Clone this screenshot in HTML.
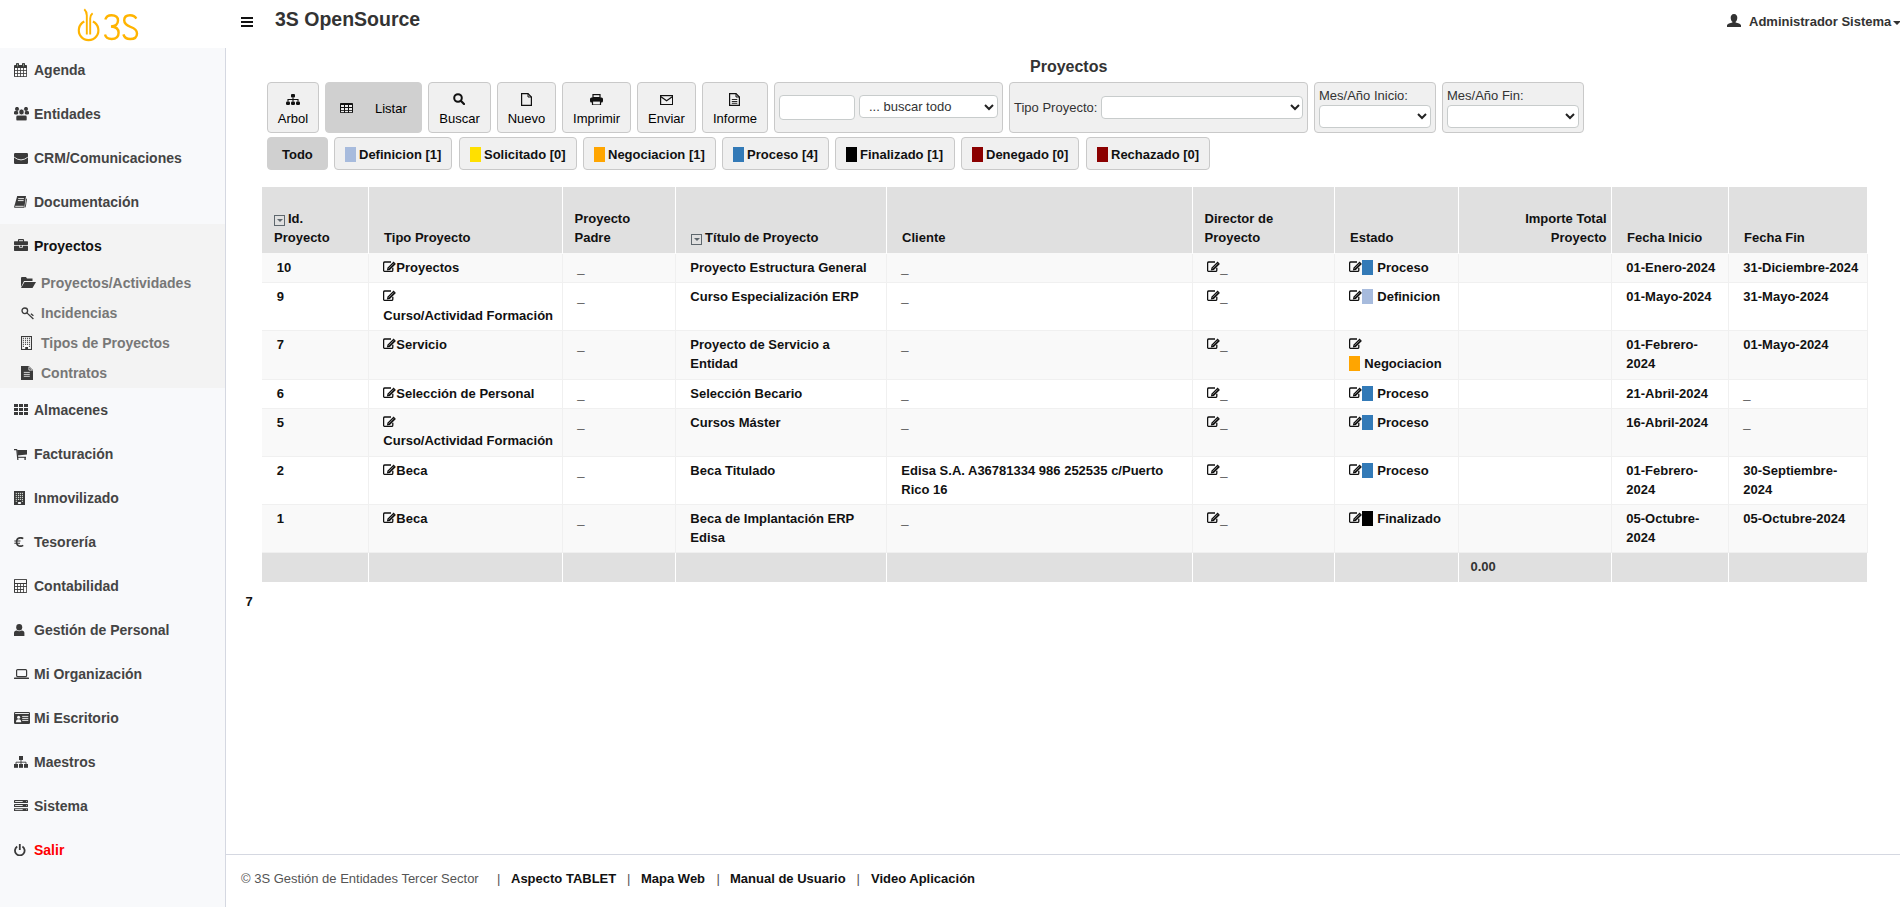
<!DOCTYPE html>
<html><head><meta charset="utf-8">
<style>
*{box-sizing:border-box;margin:0;padding:0}
html,body{width:1900px;height:907px;overflow:hidden;background:#fff;font-family:"Liberation Sans",sans-serif;color:#333}
.abs{position:absolute}
#logo{left:0;top:0;width:225px;height:48px}
#side{left:0;top:48px;width:226px;height:859px;background:#f8f9fb;border-right:1px solid #d5d8e1}
.mi{position:absolute;left:0;width:225px;height:44px;font-weight:bold;font-size:14px;color:#444}
.mi span{position:absolute;left:34px;top:14px;line-height:16px}
.mi svg{position:absolute}
.sub{position:absolute;left:0;top:176px;width:225px;height:164px;background:#f3f3f3}
.si{position:absolute;left:0;width:225px;height:30px;font-weight:bold;font-size:14px;color:#777}
.si span{position:absolute;left:41px;top:7px;line-height:16px}
.si svg{position:absolute}
#hdr-title{left:275px;top:7px;font-size:19.5px;font-weight:bold;color:#333;line-height:24px}
#user{left:1749px;top:14px;font-size:13px;font-weight:bold;color:#333;line-height:16px}
#ptitle{left:1030px;top:58px;font-size:16px;font-weight:bold;color:#333;line-height:18px}
.btn{position:absolute;top:82px;height:51px;background:#f0f0f0;border:1px solid #c9c9c9;border-radius:4px;font-size:13px;color:#000}
.btn .t{position:absolute;left:0;right:0;top:28px;text-align:center;line-height:15px}
.btn svg{position:absolute}
.grp{position:absolute;top:82px;height:51px;background:#f0f0f0;border:1px solid #c9c9c9;border-radius:4px;font-size:13px;color:#333}
.inp{position:absolute;background:#fff;border:1px solid #c8cccc;border-radius:4px}
.chev{position:absolute}
.fb{position:absolute;top:137px;height:33px;background:#f0f0f0;border:1px solid #c9c9c9;border-radius:4px;font-size:13px;font-weight:bold;color:#111}
.fb .sw{position:absolute;left:10px;top:9px;width:11px;height:15px}
.fb .t{position:absolute;top:9px;line-height:15px}
#tbl{position:absolute;left:262px;top:187px;border-collapse:collapse;table-layout:fixed;font-size:13px;font-weight:bold;color:#111}
#tbl th{background:#e0e0e0;border-left:1px solid #fff;border-right:1px solid #fff;height:66px;vertical-align:bottom;text-align:left;padding:0 6px 5.5px 12px;line-height:18.3px}
#tbl td{border:1px solid #f0f0f0;vertical-align:top;padding:5px 6px 5px 12px;line-height:18.57px}
#tbl tr.st td{background:#f9f9f9}
#tbl tr.r1 td{border-top-color:#f9f9f9}
#tbl tr.r3 td{padding-bottom:5.87px}
#tbl tr.r4 td{padding-bottom:4.13px}
#tbl tr.ft td{background:#e0e0e0;border-color:#fff;height:30px}
#tbl th:first-child,#tbl td:first-child{border-left:0}
.sp{padding-left:15.6px!important}
#tbl td.sp{padding-left:14.8px!important}
.dash{font-weight:normal;color:#555}
.ed{display:inline-block;width:13px;height:11px;vertical-align:0}
.esw{display:inline-block;width:11px;height:15px;vertical-align:-3px;margin-right:4px}
.sortb{display:inline-block;width:11px;height:11px;border:1px solid #5e676d;vertical-align:-3px;position:relative;margin-right:3px}
.sortb:after{content:"";position:absolute;left:2px;top:3px;border-left:3px solid transparent;border-right:3px solid transparent;border-top:3px solid #5e676d}
#seven{left:245.5px;top:594px;font-size:13px;font-weight:bold;color:#111;line-height:16px}
#foot{left:226px;top:854px;width:1674px;height:53px;border-top:1px solid #d5d8e1;font-size:13px;color:#555}
.ft{top:871px;font-size:13px;line-height:16px;color:#555;white-space:nowrap}
.ft.b{font-weight:bold;color:#111}
</style></head><body>
<div id="logo" class="abs">
<svg class="abs" style="left:0;top:0" width="225" height="48" viewBox="0 0 225 48" fill="none" stroke="#ffb400">
 <path d="M84.3 21.6 A9.8 9.8 0 1 0 92.9 21.6" stroke-width="2.2"/>
 <path d="M86.8 34.6 V15.5 Q86.8 11.5 84.3 9.2" stroke-width="1.9"/>
 <path d="M90.2 34.6 V18.5 Q90.2 15 92.6 13.2" stroke-width="1.9"/>
 <path d="M105.3 19.5 Q106.5 15.2 111.5 15.2 Q118 15.2 118 20.5 Q118 26 111 26.5 Q118.6 26.8 118.6 32.8 Q118.6 39 111.6 39 Q106 39 105 34.5" stroke-width="2.4"/>
 <path d="M136.3 18.6 Q134.5 15.2 130 15.2 Q124.2 15.2 124.2 20.3 Q124.2 24.5 130.5 26.8 Q137 29 137 33.4 Q137 39 130.2 39 Q124.6 39 123.4 34.4" stroke-width="2.4"/>
</svg>
</div>
<div id="side" class="abs">
<div class="sub"></div>
<div class="mi" style="top:0px"><span>Agenda</span></div>
<svg class="abs" style="left:14px;top:15px" width="13" height="14" viewBox="0 0 13 14"><rect x="0" y="2" width="13" height="12" rx="0.8" fill="#3a3a3a"/><rect x="2" y="0" width="3" height="3.5" rx="0.8" fill="#3a3a3a"/><rect x="8" y="0" width="3" height="3.5" rx="0.8" fill="#3a3a3a"/><rect x="3.1" y="0.8" width="0.8" height="2.6" fill="#9a9"/><rect x="9.1" y="0.8" width="0.8" height="2.6" fill="#9a9"/><rect x="1" y="5" width="2.2" height="2.2" fill="#fbfbfb"/><rect x="1" y="8" width="2.2" height="2.2" fill="#fbfbfb"/><rect x="1" y="11" width="2.2" height="2.2" fill="#fbfbfb"/><rect x="4" y="5" width="2.2" height="2.2" fill="#fbfbfb"/><rect x="4" y="8" width="2.2" height="2.2" fill="#fbfbfb"/><rect x="4" y="11" width="2.2" height="2.2" fill="#fbfbfb"/><rect x="7" y="5" width="2.2" height="2.2" fill="#fbfbfb"/><rect x="7" y="8" width="2.2" height="2.2" fill="#fbfbfb"/><rect x="7" y="11" width="2.2" height="2.2" fill="#fbfbfb"/><rect x="10" y="5" width="2.2" height="2.2" fill="#fbfbfb"/><rect x="10" y="8" width="2.2" height="2.2" fill="#fbfbfb"/><rect x="10" y="11" width="2.2" height="2.2" fill="#fbfbfb"/></svg>
<div class="mi" style="top:44px"><span>Entidades</span></div>
<svg class="abs" style="left:14px;top:59px" width="15" height="14" viewBox="0 0 15 14"><circle cx="3" cy="1.9" r="2" fill="#3a3a3a"/><circle cx="12" cy="1.9" r="2" fill="#3a3a3a"/><rect x="0" y="4.1" width="4.2" height="3.5" rx="1.4" fill="#3a3a3a"/><rect x="10.8" y="4.1" width="4.2" height="3.5" rx="1.4" fill="#3a3a3a"/><ellipse cx="7.5" cy="5" rx="2.7" ry="2.9" fill="#3a3a3a" stroke="#f8f9fb" stroke-width="0.7"/><rect x="2" y="8.2" width="11" height="5.6" rx="1.6" fill="#3a3a3a" stroke="#f8f9fb" stroke-width="0.6"/></svg>
<div class="mi" style="top:88px"><span>CRM/Comunicaciones</span></div>
<svg class="abs" style="left:14px;top:105px" width="14" height="11" viewBox="0 0 14 11"><rect x="0" y="0" width="14" height="11" rx="1.2" fill="#3a3a3a"/><path d="M0.2 4.2 Q7 9.6 13.8 4.2" fill="none" stroke="#f8f9fb" stroke-width="0.9"/></svg>
<div class="mi" style="top:132px"><span>Documentación</span></div>
<svg class="abs" style="left:14px;top:148px" width="13" height="12" viewBox="0 0 13 12"><path d="M3.2 0 H12 L10.3 11.8 H0.6 Q0 11.8 0.1 11 Z" fill="#3a3a3a"/><path d="M12.7 2.6 L11.2 11.4" stroke="#3a3a3a" stroke-width="0.9"/><path d="M4.2 2.6 H9.9 M3.9 4.6 H9.6 M1.2 10.3 H9.7" stroke="#fbfbfb" stroke-width="0.9"/></svg>
<div class="mi" style="top:176px"><span style="color:#111">Proyectos</span></div>
<svg class="abs" style="left:14px;top:191px" width="14" height="12" viewBox="0 0 14 12"><rect x="4.5" y="0.6" width="5" height="2.6" rx="0.5" fill="none" stroke="#3a3a3a" stroke-width="1.1"/><rect x="0" y="2.3" width="14" height="3.6" rx="0.6" fill="#3a3a3a"/><rect x="0" y="6.8" width="14" height="5.1" rx="0.6" fill="#3a3a3a"/><rect x="5.2" y="6.1" width="3.6" height="2.6" fill="#f3f3f3"/><rect x="6" y="6.6" width="2" height="1.3" fill="#3a3a3a"/></svg>
<div class="si" style="top:220px"><span>Proyectos/Actividades</span></div>
<svg class="abs" style="left:21px;top:229px" width="15" height="11" viewBox="0 0 15 11"><path d="M0 1 Q0 0 1 0 H5 L6 1.5 H11.5 V4 H3 L0 10Z" fill="#3a3a3a"/><path d="M3.5 5 H15 L11.5 11 H0Z" fill="#3a3a3a"/></svg>
<div class="si" style="top:250px"><span>Incidencias</span></div>
<svg class="abs" style="left:21px;top:259px" width="13" height="13" viewBox="0 0 13 13"><circle cx="3.8" cy="3.8" r="2.8" fill="none" stroke="#3a3a3a" stroke-width="1.3"/><path d="M5.9 5.9 L12.4 12 M9.9 6.7 L12.4 8.8" stroke="#3a3a3a" stroke-width="1.3"/></svg>
<div class="si" style="top:280px"><span>Tipos de Proyectos</span></div>
<svg class="abs" style="left:21px;top:288px" width="11" height="14" viewBox="0 0 11 14"><rect x="0.5" y="0.5" width="10" height="13" fill="#fbfbfb" stroke="#3a3a3a" stroke-width="1.1"/><rect x="1.8499999999999999" y="1.7499999999999998" width="1.1" height="1.1" fill="#3a3a3a"/><rect x="3.95" y="1.7499999999999998" width="1.1" height="1.1" fill="#3a3a3a"/><rect x="5.95" y="1.7499999999999998" width="1.1" height="1.1" fill="#3a3a3a"/><rect x="7.95" y="1.7499999999999998" width="1.1" height="1.1" fill="#3a3a3a"/><rect x="1.8499999999999999" y="3.75" width="1.1" height="1.1" fill="#3a3a3a"/><rect x="3.95" y="3.75" width="1.1" height="1.1" fill="#3a3a3a"/><rect x="5.95" y="3.75" width="1.1" height="1.1" fill="#3a3a3a"/><rect x="7.95" y="3.75" width="1.1" height="1.1" fill="#3a3a3a"/><rect x="1.8499999999999999" y="5.75" width="1.1" height="1.1" fill="#3a3a3a"/><rect x="3.95" y="5.75" width="1.1" height="1.1" fill="#3a3a3a"/><rect x="5.95" y="5.75" width="1.1" height="1.1" fill="#3a3a3a"/><rect x="7.95" y="5.75" width="1.1" height="1.1" fill="#3a3a3a"/><rect x="1.8499999999999999" y="7.750000000000001" width="1.1" height="1.1" fill="#3a3a3a"/><rect x="3.95" y="7.750000000000001" width="1.1" height="1.1" fill="#3a3a3a"/><rect x="5.95" y="7.750000000000001" width="1.1" height="1.1" fill="#3a3a3a"/><rect x="7.95" y="7.750000000000001" width="1.1" height="1.1" fill="#3a3a3a"/><rect x="1.8499999999999999" y="9.75" width="1.1" height="1.1" fill="#3a3a3a"/><rect x="7.95" y="9.75" width="1.1" height="1.1" fill="#3a3a3a"/><rect x="4.2" y="11" width="2.8" height="2.5" fill="#3a3a3a"/></svg>
<div class="si" style="top:310px"><span>Contratos</span></div>
<svg class="abs" style="left:21px;top:318px" width="12" height="14" viewBox="0 0 12 14"><path d="M0 0 H8 L12 4 V14 H0Z" fill="#3a3a3a"/><path d="M7.9 0.5 V4.1 H11.5Z" fill="#3a3a3a" stroke="#f3f3f3" stroke-width="0.8"/><path d="M2.8 6.4 H8.8 M2.8 8.4 H8.8 M2.8 10.3 H8.8" stroke="#fbfbfb" stroke-width="0.8"/></svg>
<div class="mi" style="top:340px"><span>Almacenes</span></div>
<svg class="abs" style="left:14px;top:356px" width="14" height="11" viewBox="0 0 14 11"><rect x="0" y="0" width="4" height="3" fill="#3a3a3a"/><rect x="0" y="4" width="4" height="3" fill="#3a3a3a"/><rect x="0" y="8" width="4" height="3" fill="#3a3a3a"/><rect x="5" y="0" width="4" height="3" fill="#3a3a3a"/><rect x="5" y="4" width="4" height="3" fill="#3a3a3a"/><rect x="5" y="8" width="4" height="3" fill="#3a3a3a"/><rect x="10" y="0" width="4" height="3" fill="#3a3a3a"/><rect x="10" y="4" width="4" height="3" fill="#3a3a3a"/><rect x="10" y="8" width="4" height="3" fill="#3a3a3a"/></svg>
<div class="mi" style="top:384px"><span>Facturación</span></div>
<svg class="abs" style="left:14px;top:400px" width="14" height="12" viewBox="0 0 14 12"><path d="M0 1.5 H2.9 M2.8 1.5 L3.9 12" fill="none" stroke="#3a3a3a" stroke-width="1.25"/><path d="M3.2 2 H13 V6.6 L3.6 7.6Z" fill="#3a3a3a"/><path d="M3.6 9.3 H11.9" stroke="#3a3a3a" stroke-width="1.1"/><rect x="10.4" y="9" width="1.4" height="3" fill="#3a3a3a"/></svg>
<div class="mi" style="top:428px"><span>Inmovilizado</span></div>
<svg class="abs" style="left:14px;top:443px" width="11" height="14" viewBox="0 0 11 14"><rect x="0" y="0" width="11" height="14" fill="#3a3a3a"/><rect x="1.7499999999999998" y="1.8499999999999999" width="1.1" height="1.1" fill="#dfe8df"/><rect x="3.95" y="1.8499999999999999" width="1.1" height="1.1" fill="#dfe8df"/><rect x="5.8500000000000005" y="1.8499999999999999" width="1.1" height="1.1" fill="#dfe8df"/><rect x="7.8500000000000005" y="1.8499999999999999" width="1.1" height="1.1" fill="#dfe8df"/><rect x="1.7499999999999998" y="3.8500000000000005" width="1.1" height="1.1" fill="#dfe8df"/><rect x="3.95" y="3.8500000000000005" width="1.1" height="1.1" fill="#dfe8df"/><rect x="5.8500000000000005" y="3.8500000000000005" width="1.1" height="1.1" fill="#dfe8df"/><rect x="7.8500000000000005" y="3.8500000000000005" width="1.1" height="1.1" fill="#dfe8df"/><rect x="1.7499999999999998" y="5.8500000000000005" width="1.1" height="1.1" fill="#dfe8df"/><rect x="3.95" y="5.8500000000000005" width="1.1" height="1.1" fill="#dfe8df"/><rect x="5.8500000000000005" y="5.8500000000000005" width="1.1" height="1.1" fill="#dfe8df"/><rect x="7.8500000000000005" y="5.8500000000000005" width="1.1" height="1.1" fill="#dfe8df"/><rect x="1.7499999999999998" y="7.8500000000000005" width="1.1" height="1.1" fill="#dfe8df"/><rect x="3.95" y="7.8500000000000005" width="1.1" height="1.1" fill="#dfe8df"/><rect x="5.8500000000000005" y="7.8500000000000005" width="1.1" height="1.1" fill="#dfe8df"/><rect x="7.8500000000000005" y="7.8500000000000005" width="1.1" height="1.1" fill="#dfe8df"/><rect x="1.75" y="9.75" width="1.1" height="1.1" fill="#dfe8df"/><rect x="7.85" y="9.75" width="1.1" height="1.1" fill="#dfe8df"/><rect x="3.9" y="10.9" width="3.2" height="2.1" rx="0.8" fill="#f8f9fb"/></svg>
<div class="mi" style="top:472px"><span>Tesorería</span></div>
<svg class="abs" style="left:14px;top:489px" width="10" height="10" viewBox="0 0 10 10"><path d="M9.2 1.6 Q8.2 0.8 6.6 0.8 Q2.6 0.8 2.6 5 Q2.6 9.2 6.6 9.2 Q8.2 9.2 9.2 8.4" fill="none" stroke="#3a3a3a" stroke-width="1.7"/><path d="M0.3 4 H6.5 M0.3 6.2 H6" stroke="#3a3a3a" stroke-width="1.1"/></svg>
<div class="mi" style="top:516px"><span>Contabilidad</span></div>
<svg class="abs" style="left:14px;top:531px" width="13" height="14" viewBox="0 0 13 14"><rect x="0" y="0" width="13" height="14" rx="0.8" fill="#3a3a3a"/><rect x="1" y="0.9" width="11" height="3.1" fill="#fbfbfb"/><rect x="1" y="5" width="2.2" height="2.1" fill="#fbfbfb"/><rect x="1" y="8" width="2.2" height="2.1" fill="#fbfbfb"/><rect x="1" y="11" width="2.2" height="2.1" fill="#fbfbfb"/><rect x="4" y="5" width="2.2" height="2.1" fill="#fbfbfb"/><rect x="4" y="8" width="2.2" height="2.1" fill="#fbfbfb"/><rect x="4" y="11" width="2.2" height="2.1" fill="#fbfbfb"/><rect x="7" y="5" width="2.2" height="2.1" fill="#fbfbfb"/><rect x="7" y="8" width="2.2" height="2.1" fill="#fbfbfb"/><rect x="7" y="11" width="2.2" height="2.1" fill="#fbfbfb"/><rect x="10" y="5" width="2.2" height="2.1" fill="#fbfbfb"/><rect x="10" y="8" width="2.2" height="5.1" fill="#fbfbfb"/></svg>
<div class="mi" style="top:560px"><span>Gestión de Personal</span></div>
<svg class="abs" style="left:14px;top:576px" width="11" height="12" viewBox="0 0 11 12"><ellipse cx="5.2" cy="3.2" rx="3" ry="3.2" fill="#3a3a3a"/><path d="M0 12 V9 Q0 6.8 2.8 6.5 Q5.2 8 7.6 6.5 Q10.4 6.8 10.4 9 V12Z" fill="#3a3a3a"/></svg>
<div class="mi" style="top:604px"><span>Mi Organización</span></div>
<svg class="abs" style="left:14px;top:621px" width="15" height="10" viewBox="0 0 15 10"><rect x="2.6" y="0.6" width="10" height="7" rx="1" fill="none" stroke="#3a3a3a" stroke-width="1.2"/><rect x="0" y="8.4" width="15" height="1.5" rx="0.5" fill="#3a3a3a"/></svg>
<div class="mi" style="top:648px"><span>Mi Escritorio</span></div>
<svg class="abs" style="left:14px;top:664px" width="16" height="12" viewBox="0 0 16 12"><rect x="0" y="0" width="16" height="12" rx="1.2" fill="#3a3a3a"/><rect x="1.1" y="1.1" width="13.8" height="0.9" fill="#fbfbfb"/><circle cx="4.6" cy="5.2" r="1.5" fill="#fbfbfb"/><path d="M2 10.3 Q2 7.3 4.6 7.3 Q7.2 7.3 7.2 10.3Z" fill="#fbfbfb"/><path d="M8.2 4.4 H14.3 M8.2 6.4 H14.3 M8.2 8.4 H14.3" stroke="#fbfbfb" stroke-width="0.9"/></svg>
<div class="mi" style="top:692px"><span>Maestros</span></div>
<svg class="abs" style="left:14px;top:708px" width="14" height="12" viewBox="0 0 14 12"><rect x="5" y="0" width="4" height="4" fill="#3a3a3a"/><path d="M7 4 V8 M2 8 V6.2 H12 V8" fill="none" stroke="#3a3a3a" stroke-width="0.9"/><rect x="0" y="8" width="4" height="3.8" fill="#3a3a3a"/><rect x="5" y="8" width="4" height="3.8" fill="#3a3a3a"/><rect x="10" y="8" width="4" height="3.8" fill="#3a3a3a"/></svg>
<div class="mi" style="top:736px"><span>Sistema</span></div>
<svg class="abs" style="left:14px;top:752px" width="14" height="12" viewBox="0 0 14 12"><rect x="0" y="0" width="14" height="2.9" rx="0.4" fill="#3a3a3a"/><rect x="1.1" y="1" width="7.6" height="0.9" fill="#fbfbfb"/><rect x="12.2" y="1" width="0.8" height="0.9" fill="#ccc"/><rect x="0" y="4.1" width="14" height="2.9" rx="0.4" fill="#3a3a3a"/><rect x="1.1" y="5.1" width="7.6" height="0.9" fill="#fbfbfb"/><rect x="12.2" y="5.1" width="0.8" height="0.9" fill="#ccc"/><rect x="0" y="8.2" width="14" height="2.9" rx="0.4" fill="#3a3a3a"/><rect x="1.1" y="9.2" width="7.6" height="0.9" fill="#fbfbfb"/><rect x="12.2" y="9.2" width="0.8" height="0.9" fill="#ccc"/></svg>
<div class="mi" style="top:780px"><span style="color:#f00">Salir</span></div>
<svg class="abs" style="left:14px;top:796px" width="12" height="12" viewBox="0 0 12 12"><path d="M3.2 2.6 A4.8 4.8 0 1 0 8.4 2.6" fill="none" stroke="#3a3a3a" stroke-width="1.8"/><path d="M5.8 0 V6" stroke="#3a3a3a" stroke-width="1.8"/></svg>
</div>
<div id="hdr-title" class="abs">3S OpenSource</div>
<svg class="abs" style="left:241px;top:17px" width="12" height="10" viewBox="0 0 12 10"><rect x="0" y="0" width="12" height="2" fill="#111"/><rect x="0" y="4" width="12" height="2" fill="#111"/><rect x="0" y="8" width="12" height="2" fill="#111"/></svg>
<svg class="abs" style="left:1727px;top:14px" width="14" height="13" viewBox="0 0 14 13"><path d="M7 0 C9.3 0 10.3 1.8 10.3 3.8 C10.3 5.6 9.5 7.2 8.6 7.8 L8.6 8.6 C11 9.2 13.6 10 14 11.2 V13 H0 V11.2 C0.4 10 3 9.2 5.4 8.6 L5.4 7.8 C4.5 7.2 3.7 5.6 3.7 3.8 C3.7 1.8 4.7 0 7 0Z" fill="#333"/></svg>
<div id="user" class="abs">Administrador Sistema</div>
<svg class="abs" style="left:1893px;top:21px" width="9" height="4" viewBox="0 0 9 4"><path d="M0 0 H8 L4 4Z" fill="#333"/></svg>
<div id="ptitle" class="abs">Proyectos</div>
<div class="btn" style="left:267px;width:52px"><div class="t">Arbol</div></div>
<svg class="abs" style="left:286px;top:94px" width="14" height="11" viewBox="0 0 14 11"><rect x="5" y="0" width="4" height="3.5" rx="1" fill="#111"/><path d="M7 3.5 V5.5 M2 7.5 V5.5 H12 V7.5 M7 5.5 V7.5" fill="none" stroke="#111" stroke-width="1.1"/><rect x="0" y="7.5" width="4" height="3.5" rx="1.2" fill="#111"/><rect x="5" y="7.5" width="4" height="3.5" rx="1.2" fill="#111"/><rect x="10" y="7.5" width="4" height="3.5" rx="1.2" fill="#111"/></svg>
<div class="btn" style="left:325px;width:97px;background:#d0d0d0;border-color:#d0d0d0"><div class="t" style="left:49px;right:auto;top:18px">Listar</div></div>
<svg class="abs" style="left:340px;top:103px" width="13" height="10" viewBox="0 0 13 10"><rect x="0" y="0" width="13" height="10" rx="0.8" fill="#111"/><rect x="1" y="2" width="3" height="2" fill="#eaeaea"/><rect x="1" y="5" width="3" height="2" fill="#eaeaea"/><rect x="1" y="7.8" width="3" height="1.4" fill="#eaeaea"/><rect x="5" y="2" width="3" height="2" fill="#eaeaea"/><rect x="5" y="5" width="3" height="2" fill="#eaeaea"/><rect x="5" y="7.8" width="3" height="1.4" fill="#eaeaea"/><rect x="9" y="2" width="3" height="2" fill="#eaeaea"/><rect x="9" y="5" width="3" height="2" fill="#eaeaea"/><rect x="9" y="7.8" width="3" height="1.4" fill="#eaeaea"/></svg>
<div class="btn" style="left:428px;width:63px"><div class="t">Buscar</div></div>
<svg class="abs" style="left:453px;top:93px" width="12" height="12" viewBox="0 0 12 12"><circle cx="5" cy="5" r="3.8" fill="none" stroke="#111" stroke-width="2"/><path d="M7.8 7.8 L11 11" stroke="#111" stroke-width="2.2" stroke-linecap="round"/></svg>
<div class="btn" style="left:497px;width:59px"><div class="t">Nuevo</div></div>
<svg class="abs" style="left:521px;top:93px" width="11" height="13" viewBox="0 0 11 13"><path d="M0.6 0.6 H7 L10.4 4 V12.4 H0.6Z" fill="none" stroke="#111" stroke-width="1.2"/><path d="M7 0.6 V4 H10.4" fill="none" stroke="#111" stroke-width="1"/></svg>
<div class="btn" style="left:562px;width:69px"><div class="t">Imprimir</div></div>
<svg class="abs" style="left:590px;top:94px" width="13" height="11" viewBox="0 0 13 11"><rect x="3" y="0.6" width="7" height="3" fill="none" stroke="#111" stroke-width="1.2"/><rect x="0" y="3.5" width="13" height="5" rx="1.5" fill="#111"/><rect x="2.5" y="7" width="8" height="4" fill="#f0f0f0" stroke="#111" stroke-width="1.2"/></svg>
<div class="btn" style="left:637px;width:59px"><div class="t">Enviar</div></div>
<svg class="abs" style="left:660px;top:95px" width="13" height="10" viewBox="0 0 13 10"><rect x="0.6" y="0.6" width="12" height="9" fill="none" stroke="#111" stroke-width="1.2"/><path d="M0.6 1.5 L6.6 5.8 L12.6 1.5" fill="none" stroke="#111" stroke-width="1.2"/></svg>
<div class="btn" style="left:702px;width:66px"><div class="t">Informe</div></div>
<svg class="abs" style="left:729px;top:93px" width="11" height="13" viewBox="0 0 11 13"><path d="M0.6 0.6 H7 L10.4 4 V12.4 H0.6Z" fill="none" stroke="#111" stroke-width="1.2"/><path d="M7 0.6 V4 H10.4" fill="none" stroke="#111" stroke-width="1"/><path d="M2.8 6.5 H8.3 M2.8 8.5 H8.3 M2.8 10.3 H8.3" stroke="#111" stroke-width="0.9"/></svg>
<div class="grp" style="left:774px;width:229px"></div>
<div class="inp" style="left:779px;top:95px;width:76px;height:25px"></div>
<div class="inp" style="left:859px;top:95px;width:139px;height:23px"><div class="abs" style="left:9px;top:3px;line-height:15px;font-size:13px;color:#333">... buscar todo</div></div>
<svg class="abs" style="left:984px;top:104px" width="10" height="7" viewBox="0 0 10 7"><path d="M1 1 L5 5 L9 1" fill="none" stroke="#222" stroke-width="2"/></svg>
<div class="grp" style="left:1009px;width:299px"><div class="abs" style="left:4px;top:17px;line-height:15px">Tipo Proyecto:</div></div>
<div class="inp" style="left:1101px;top:96px;width:202px;height:23px"></div>
<svg class="abs" style="left:1290px;top:104px" width="10" height="7" viewBox="0 0 10 7"><path d="M1 1 L5 5 L9 1" fill="none" stroke="#222" stroke-width="2"/></svg>
<div class="grp" style="left:1314px;width:122px"><div class="abs" style="left:4px;top:5px;line-height:15px">Mes/Año Inicio:</div></div>
<div class="inp" style="left:1319px;top:105px;width:112px;height:23px"></div>
<svg class="abs" style="left:1417px;top:113px" width="10" height="7" viewBox="0 0 10 7"><path d="M1 1 L5 5 L9 1" fill="none" stroke="#222" stroke-width="2"/></svg>
<div class="grp" style="left:1442px;width:142px"><div class="abs" style="left:4px;top:5px;line-height:15px">Mes/Año Fin:</div></div>
<div class="inp" style="left:1447px;top:105px;width:132px;height:23px"></div>
<svg class="abs" style="left:1565px;top:113px" width="10" height="7" viewBox="0 0 10 7"><path d="M1 1 L5 5 L9 1" fill="none" stroke="#222" stroke-width="2"/></svg>
<div class="fb" style="left:267px;width:61px;background:#d0d0d0;border-color:#d0d0d0"><div class="t" style="left:14px">Todo</div></div>
<div class="fb" style="left:334px;width:118px"><div class="sw" style="background:#a7bbdd"></div><div class="t" style="left:24px">Definicion [1]</div></div>
<div class="fb" style="left:459px;width:118px"><div class="sw" style="background:#ffe000"></div><div class="t" style="left:24px">Solicitado [0]</div></div>
<div class="fb" style="left:583px;width:133px"><div class="sw" style="background:#ffa500"></div><div class="t" style="left:24px">Negociacion [1]</div></div>
<div class="fb" style="left:722px;width:107px"><div class="sw" style="background:#337ab7"></div><div class="t" style="left:24px">Proceso [4]</div></div>
<div class="fb" style="left:835px;width:120px"><div class="sw" style="background:#000"></div><div class="t" style="left:24px">Finalizado [1]</div></div>
<div class="fb" style="left:961px;width:118px"><div class="sw" style="background:#8b0000"></div><div class="t" style="left:24px">Denegado [0]</div></div>
<div class="fb" style="left:1086px;width:124px"><div class="sw" style="background:#8b0000"></div><div class="t" style="left:24px">Rechazado [0]</div></div>
<table id="tbl"><colgroup><col style="width:106px"><col style="width:194px"><col style="width:113px"><col style="width:211px"><col style="width:306px"><col style="width:142px"><col style="width:124px"><col style="width:153px"><col style="width:117px"><col style="width:139px"></colgroup>
<tr><th><span class="sortb"></span>Id.<br>Proyecto</th><th class="sp">Tipo Proyecto</th><th>Proyecto<br>Padre</th><th class="sp"><span class="sortb"></span>Título de Proyecto</th><th class="sp">Cliente</th><th>Director de<br>Proyecto</th><th class="sp">Estado</th><th style="text-align:right;padding-right:4px">Importe Total<br>Proyecto</th><th class="sp">Fecha Inicio</th><th class="sp">Fecha Fin</th></tr>
<tr class="st r1"><td class="sp">10</td><td class="sp"><svg class="ed" viewBox="0 0 13 11"><path d="M8 1 H1.8 Q0.6 1 0.6 2.2 V9.2 Q0.6 10.4 1.8 10.4 H8.6 Q9.8 10.4 9.8 9.2 V6.8" fill="none" stroke="#111" stroke-width="1.3"/><path d="M3.8 9.6 L4.6 6.6 L10.6 0.6 L12.9 2.9 L6.9 8.9Z" fill="#111"/><path d="M5.6 7.6 L10.7 2.5" stroke="#ddd" stroke-width="0.6"/></svg>Proyectos</td><td class="sp"><span class="dash">_</span></td><td class="sp">Proyecto Estructura General</td><td class="sp"><span class="dash">_</span></td><td class="sp"><svg class="ed" viewBox="0 0 13 11"><path d="M8 1 H1.8 Q0.6 1 0.6 2.2 V9.2 Q0.6 10.4 1.8 10.4 H8.6 Q9.8 10.4 9.8 9.2 V6.8" fill="none" stroke="#111" stroke-width="1.3"/><path d="M3.8 9.6 L4.6 6.6 L10.6 0.6 L12.9 2.9 L6.9 8.9Z" fill="#111"/><path d="M5.6 7.6 L10.7 2.5" stroke="#ddd" stroke-width="0.6"/></svg><span class="dash">_</span></td><td class="sp"><svg class="ed" viewBox="0 0 13 11"><path d="M8 1 H1.8 Q0.6 1 0.6 2.2 V9.2 Q0.6 10.4 1.8 10.4 H8.6 Q9.8 10.4 9.8 9.2 V6.8" fill="none" stroke="#111" stroke-width="1.3"/><path d="M3.8 9.6 L4.6 6.6 L10.6 0.6 L12.9 2.9 L6.9 8.9Z" fill="#111"/><path d="M5.6 7.6 L10.7 2.5" stroke="#ddd" stroke-width="0.6"/></svg><span class="esw" style="background:#337ab7"></span>Proceso</td><td></td><td class="sp">01-Enero-2024</td><td class="sp">31-Diciembre-2024</td></tr>
<tr><td class="sp">9</td><td class="sp"><svg class="ed" viewBox="0 0 13 11"><path d="M8 1 H1.8 Q0.6 1 0.6 2.2 V9.2 Q0.6 10.4 1.8 10.4 H8.6 Q9.8 10.4 9.8 9.2 V6.8" fill="none" stroke="#111" stroke-width="1.3"/><path d="M3.8 9.6 L4.6 6.6 L10.6 0.6 L12.9 2.9 L6.9 8.9Z" fill="#111"/><path d="M5.6 7.6 L10.7 2.5" stroke="#ddd" stroke-width="0.6"/></svg><br>Curso/Actividad Formación</td><td class="sp"><span class="dash">_</span></td><td class="sp">Curso Especialización ERP</td><td class="sp"><span class="dash">_</span></td><td class="sp"><svg class="ed" viewBox="0 0 13 11"><path d="M8 1 H1.8 Q0.6 1 0.6 2.2 V9.2 Q0.6 10.4 1.8 10.4 H8.6 Q9.8 10.4 9.8 9.2 V6.8" fill="none" stroke="#111" stroke-width="1.3"/><path d="M3.8 9.6 L4.6 6.6 L10.6 0.6 L12.9 2.9 L6.9 8.9Z" fill="#111"/><path d="M5.6 7.6 L10.7 2.5" stroke="#ddd" stroke-width="0.6"/></svg><span class="dash">_</span></td><td class="sp"><svg class="ed" viewBox="0 0 13 11"><path d="M8 1 H1.8 Q0.6 1 0.6 2.2 V9.2 Q0.6 10.4 1.8 10.4 H8.6 Q9.8 10.4 9.8 9.2 V6.8" fill="none" stroke="#111" stroke-width="1.3"/><path d="M3.8 9.6 L4.6 6.6 L10.6 0.6 L12.9 2.9 L6.9 8.9Z" fill="#111"/><path d="M5.6 7.6 L10.7 2.5" stroke="#ddd" stroke-width="0.6"/></svg><span class="esw" style="background:#a7bbdd"></span>Definicion</td><td></td><td class="sp">01-Mayo-2024</td><td class="sp">31-Mayo-2024</td></tr>
<tr class="st r3"><td class="sp">7</td><td class="sp"><svg class="ed" viewBox="0 0 13 11"><path d="M8 1 H1.8 Q0.6 1 0.6 2.2 V9.2 Q0.6 10.4 1.8 10.4 H8.6 Q9.8 10.4 9.8 9.2 V6.8" fill="none" stroke="#111" stroke-width="1.3"/><path d="M3.8 9.6 L4.6 6.6 L10.6 0.6 L12.9 2.9 L6.9 8.9Z" fill="#111"/><path d="M5.6 7.6 L10.7 2.5" stroke="#ddd" stroke-width="0.6"/></svg>Servicio</td><td class="sp"><span class="dash">_</span></td><td class="sp">Proyecto de Servicio a Entidad</td><td class="sp"><span class="dash">_</span></td><td class="sp"><svg class="ed" viewBox="0 0 13 11"><path d="M8 1 H1.8 Q0.6 1 0.6 2.2 V9.2 Q0.6 10.4 1.8 10.4 H8.6 Q9.8 10.4 9.8 9.2 V6.8" fill="none" stroke="#111" stroke-width="1.3"/><path d="M3.8 9.6 L4.6 6.6 L10.6 0.6 L12.9 2.9 L6.9 8.9Z" fill="#111"/><path d="M5.6 7.6 L10.7 2.5" stroke="#ddd" stroke-width="0.6"/></svg><span class="dash">_</span></td><td class="sp"><svg class="ed" viewBox="0 0 13 11"><path d="M8 1 H1.8 Q0.6 1 0.6 2.2 V9.2 Q0.6 10.4 1.8 10.4 H8.6 Q9.8 10.4 9.8 9.2 V6.8" fill="none" stroke="#111" stroke-width="1.3"/><path d="M3.8 9.6 L4.6 6.6 L10.6 0.6 L12.9 2.9 L6.9 8.9Z" fill="#111"/><path d="M5.6 7.6 L10.7 2.5" stroke="#ddd" stroke-width="0.6"/></svg><br><span class="esw" style="background:#ffa500"></span>Negociacion</td><td></td><td class="sp">01-Febrero-2024</td><td class="sp">01-Mayo-2024</td></tr>
<tr class="r4"><td class="sp">6</td><td class="sp"><svg class="ed" viewBox="0 0 13 11"><path d="M8 1 H1.8 Q0.6 1 0.6 2.2 V9.2 Q0.6 10.4 1.8 10.4 H8.6 Q9.8 10.4 9.8 9.2 V6.8" fill="none" stroke="#111" stroke-width="1.3"/><path d="M3.8 9.6 L4.6 6.6 L10.6 0.6 L12.9 2.9 L6.9 8.9Z" fill="#111"/><path d="M5.6 7.6 L10.7 2.5" stroke="#ddd" stroke-width="0.6"/></svg>Selección de Personal</td><td class="sp"><span class="dash">_</span></td><td class="sp">Selección Becario</td><td class="sp"><span class="dash">_</span></td><td class="sp"><svg class="ed" viewBox="0 0 13 11"><path d="M8 1 H1.8 Q0.6 1 0.6 2.2 V9.2 Q0.6 10.4 1.8 10.4 H8.6 Q9.8 10.4 9.8 9.2 V6.8" fill="none" stroke="#111" stroke-width="1.3"/><path d="M3.8 9.6 L4.6 6.6 L10.6 0.6 L12.9 2.9 L6.9 8.9Z" fill="#111"/><path d="M5.6 7.6 L10.7 2.5" stroke="#ddd" stroke-width="0.6"/></svg><span class="dash">_</span></td><td class="sp"><svg class="ed" viewBox="0 0 13 11"><path d="M8 1 H1.8 Q0.6 1 0.6 2.2 V9.2 Q0.6 10.4 1.8 10.4 H8.6 Q9.8 10.4 9.8 9.2 V6.8" fill="none" stroke="#111" stroke-width="1.3"/><path d="M3.8 9.6 L4.6 6.6 L10.6 0.6 L12.9 2.9 L6.9 8.9Z" fill="#111"/><path d="M5.6 7.6 L10.7 2.5" stroke="#ddd" stroke-width="0.6"/></svg><span class="esw" style="background:#337ab7"></span>Proceso</td><td></td><td class="sp">21-Abril-2024</td><td class="sp"><span class="dash">_</span></td></tr>
<tr class="st"><td class="sp">5</td><td class="sp"><svg class="ed" viewBox="0 0 13 11"><path d="M8 1 H1.8 Q0.6 1 0.6 2.2 V9.2 Q0.6 10.4 1.8 10.4 H8.6 Q9.8 10.4 9.8 9.2 V6.8" fill="none" stroke="#111" stroke-width="1.3"/><path d="M3.8 9.6 L4.6 6.6 L10.6 0.6 L12.9 2.9 L6.9 8.9Z" fill="#111"/><path d="M5.6 7.6 L10.7 2.5" stroke="#ddd" stroke-width="0.6"/></svg><br>Curso/Actividad Formación</td><td class="sp"><span class="dash">_</span></td><td class="sp">Cursos Máster</td><td class="sp"><span class="dash">_</span></td><td class="sp"><svg class="ed" viewBox="0 0 13 11"><path d="M8 1 H1.8 Q0.6 1 0.6 2.2 V9.2 Q0.6 10.4 1.8 10.4 H8.6 Q9.8 10.4 9.8 9.2 V6.8" fill="none" stroke="#111" stroke-width="1.3"/><path d="M3.8 9.6 L4.6 6.6 L10.6 0.6 L12.9 2.9 L6.9 8.9Z" fill="#111"/><path d="M5.6 7.6 L10.7 2.5" stroke="#ddd" stroke-width="0.6"/></svg><span class="dash">_</span></td><td class="sp"><svg class="ed" viewBox="0 0 13 11"><path d="M8 1 H1.8 Q0.6 1 0.6 2.2 V9.2 Q0.6 10.4 1.8 10.4 H8.6 Q9.8 10.4 9.8 9.2 V6.8" fill="none" stroke="#111" stroke-width="1.3"/><path d="M3.8 9.6 L4.6 6.6 L10.6 0.6 L12.9 2.9 L6.9 8.9Z" fill="#111"/><path d="M5.6 7.6 L10.7 2.5" stroke="#ddd" stroke-width="0.6"/></svg><span class="esw" style="background:#337ab7"></span>Proceso</td><td></td><td class="sp">16-Abril-2024</td><td class="sp"><span class="dash">_</span></td></tr>
<tr><td class="sp">2</td><td class="sp"><svg class="ed" viewBox="0 0 13 11"><path d="M8 1 H1.8 Q0.6 1 0.6 2.2 V9.2 Q0.6 10.4 1.8 10.4 H8.6 Q9.8 10.4 9.8 9.2 V6.8" fill="none" stroke="#111" stroke-width="1.3"/><path d="M3.8 9.6 L4.6 6.6 L10.6 0.6 L12.9 2.9 L6.9 8.9Z" fill="#111"/><path d="M5.6 7.6 L10.7 2.5" stroke="#ddd" stroke-width="0.6"/></svg>Beca</td><td class="sp"><span class="dash">_</span></td><td class="sp">Beca Titulado</td><td class="sp">Edisa S.A. A36781334 986 252535 c/Puerto Rico 16</td><td class="sp"><svg class="ed" viewBox="0 0 13 11"><path d="M8 1 H1.8 Q0.6 1 0.6 2.2 V9.2 Q0.6 10.4 1.8 10.4 H8.6 Q9.8 10.4 9.8 9.2 V6.8" fill="none" stroke="#111" stroke-width="1.3"/><path d="M3.8 9.6 L4.6 6.6 L10.6 0.6 L12.9 2.9 L6.9 8.9Z" fill="#111"/><path d="M5.6 7.6 L10.7 2.5" stroke="#ddd" stroke-width="0.6"/></svg><span class="dash">_</span></td><td class="sp"><svg class="ed" viewBox="0 0 13 11"><path d="M8 1 H1.8 Q0.6 1 0.6 2.2 V9.2 Q0.6 10.4 1.8 10.4 H8.6 Q9.8 10.4 9.8 9.2 V6.8" fill="none" stroke="#111" stroke-width="1.3"/><path d="M3.8 9.6 L4.6 6.6 L10.6 0.6 L12.9 2.9 L6.9 8.9Z" fill="#111"/><path d="M5.6 7.6 L10.7 2.5" stroke="#ddd" stroke-width="0.6"/></svg><span class="esw" style="background:#337ab7"></span>Proceso</td><td></td><td class="sp">01-Febrero-2024</td><td class="sp">30-Septiembre-2024</td></tr>
<tr class="st"><td class="sp">1</td><td class="sp"><svg class="ed" viewBox="0 0 13 11"><path d="M8 1 H1.8 Q0.6 1 0.6 2.2 V9.2 Q0.6 10.4 1.8 10.4 H8.6 Q9.8 10.4 9.8 9.2 V6.8" fill="none" stroke="#111" stroke-width="1.3"/><path d="M3.8 9.6 L4.6 6.6 L10.6 0.6 L12.9 2.9 L6.9 8.9Z" fill="#111"/><path d="M5.6 7.6 L10.7 2.5" stroke="#ddd" stroke-width="0.6"/></svg>Beca</td><td class="sp"><span class="dash">_</span></td><td class="sp">Beca de Implantación ERP Edisa</td><td class="sp"><span class="dash">_</span></td><td class="sp"><svg class="ed" viewBox="0 0 13 11"><path d="M8 1 H1.8 Q0.6 1 0.6 2.2 V9.2 Q0.6 10.4 1.8 10.4 H8.6 Q9.8 10.4 9.8 9.2 V6.8" fill="none" stroke="#111" stroke-width="1.3"/><path d="M3.8 9.6 L4.6 6.6 L10.6 0.6 L12.9 2.9 L6.9 8.9Z" fill="#111"/><path d="M5.6 7.6 L10.7 2.5" stroke="#ddd" stroke-width="0.6"/></svg><span class="dash">_</span></td><td class="sp"><svg class="ed" viewBox="0 0 13 11"><path d="M8 1 H1.8 Q0.6 1 0.6 2.2 V9.2 Q0.6 10.4 1.8 10.4 H8.6 Q9.8 10.4 9.8 9.2 V6.8" fill="none" stroke="#111" stroke-width="1.3"/><path d="M3.8 9.6 L4.6 6.6 L10.6 0.6 L12.9 2.9 L6.9 8.9Z" fill="#111"/><path d="M5.6 7.6 L10.7 2.5" stroke="#ddd" stroke-width="0.6"/></svg><span class="esw" style="background:#000"></span>Finalizado</td><td></td><td class="sp">05-Octubre-2024</td><td class="sp">05-Octubre-2024</td></tr>
<tr class="ft"><td></td><td></td><td></td><td></td><td></td><td></td><td></td><td style="color:#333">0.00</td><td></td><td></td></tr>
</table>
<div id="seven" class="abs">7</div>
<div id="foot" class="abs"></div>
<div class="abs ft" style="left:241px">© 3S Gestión de Entidades Tercer Sector</div>
<div class="abs ft" style="left:497px">|</div><div class="abs ft b" style="left:511px">Aspecto TABLET</div>
<div class="abs ft" style="left:627px">|</div><div class="abs ft b" style="left:641px">Mapa Web</div>
<div class="abs ft" style="left:716.5px">|</div><div class="abs ft b" style="left:730px">Manual de Usuario</div>
<div class="abs ft" style="left:856.5px">|</div><div class="abs ft b" style="left:871px">Video Aplicación</div>
</body></html>
